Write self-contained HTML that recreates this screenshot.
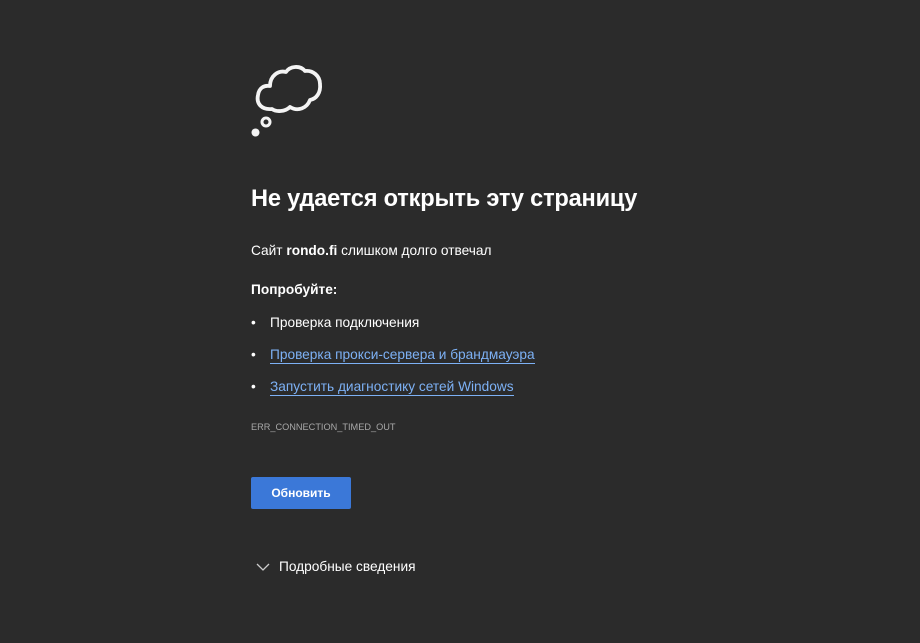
<!DOCTYPE html>
<html><head><meta charset="utf-8"><style>
html,body{margin:0;padding:0;background:#2b2b2b;width:920px;height:643px;overflow:hidden;font-family:"Liberation Sans","DejaVu Sans",sans-serif;color:#fff}
.a{position:absolute;white-space:nowrap}
h1{position:absolute;left:251px;top:186px;margin:0;font-size:23.6px;font-weight:bold;letter-spacing:-0.2px}
.t{font-size:13.7px}
a{color:#7db1f5;text-decoration:none;border-bottom:1px solid #7db1f5;padding-bottom:1px}
.b{position:absolute;left:251px;top:477px;width:100px;height:32px;background:#3b78d8;border-radius:2px;color:#fff;font-size:12px;font-weight:bold;text-align:center;line-height:32px}
</style></head><body>
<svg class="a" style="left:245px;top:60px" width="90" height="85" viewBox="245 60 90 85">
<path d="M272 109 C262 110 256 104 258 95 C259 88 264 85 270 86 C270 76 278 70 286 72 C290 66 300 65 305 71 C313 70 320 76 320 84 C321 93 316 99 310 100 C307 108 298 112 290 107 C285 112 276 112 272 109 Z" fill="none" stroke="#f4f4f4" stroke-width="3.8" stroke-linejoin="round"/>
<circle cx="266" cy="122" r="4" fill="none" stroke="#f4f4f4" stroke-width="3"/>
<circle cx="255.5" cy="132.5" r="4" fill="#f4f4f4"/>
</svg>
<h1>Не удается открыть эту страницу</h1>
<div class="a t" style="left:251px;top:243px">Сайт <b>rondo.fi</b> слишком долго отвечал</div>
<div class="a t" style="left:251px;top:282px;font-weight:bold">Попробуйте:</div>
<div class="a t" style="left:251px;top:315px">•</div><div class="a t" style="left:270px;top:315px">Проверка подключения</div>
<div class="a t" style="left:251px;top:347px">•</div><div class="a t" style="left:270px;top:347px"><a>Проверка прокси-сервера и брандмауэра</a></div>
<div class="a t" style="left:251px;top:379px">•</div><div class="a t" style="left:270px;top:379px"><a>Запустить диагностику сетей Windows</a></div>
<div class="a" style="left:251px;top:422px;font-size:9.2px;color:#a8a8a8">ERR_CONNECTION_TIMED_OUT</div>
<div class="b">Обновить</div>
<svg class="a" style="left:256px;top:562px" width="14" height="10"><path d="M1 2 L7 8 L13 2" fill="none" stroke="#ccc" stroke-width="1.3"/></svg>
<div class="a t" style="left:279px;top:559px">Подробные сведения</div>
</body></html>
